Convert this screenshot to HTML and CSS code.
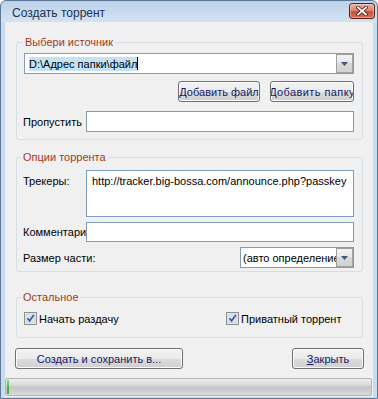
FILE: index.html
```html
<!DOCTYPE html>
<html lang="ru">
<head>
  <meta charset="UTF-8" />
  <title>Создать торрент</title>
  <link rel="stylesheet" href="styles.css">
</head>
<body>
  <div class="window">
    <div class="titlebar">
      <span class="title">Создать торрент</span>
      <span class="close">
        <svg width="12" height="10" viewBox="0 0 12 10">
          <path d="M2 1.5 L10 8.5 M10 1.5 L2 8.5" stroke="#4a1a12" stroke-width="3.4" stroke-linecap="square"/>
          <path d="M2 1.5 L10 8.5 M10 1.5 L2 8.5" stroke="#fff" stroke-width="1.8" stroke-linecap="square"/>
        </svg>
      </span>
    </div>

    <div class="client">
      <fieldset class="group g-source">
        <legend>Выбери источник</legend>
        <div class="combo wide">
          <span class="combo-text"><span class="sel">D:\Адрес папки\файл</span><span class="caret"></span></span>
          <span class="drop"><svg width="7" height="4" viewBox="0 0 7 4"><path d="M0 0 H7 L3.5 4 Z" fill="#3f5583"/></svg></span>
        </div>
        <div class="btn-row">
          <div class="btn w-file"><span>Добавить файл</span></div>
          <div class="btn w-folder"><span>Добавить папку</span></div>
        </div>
        <div class="field-row skip">
          <label>Пропустить</label>
          <div class="edit"></div>
        </div>
      </fieldset>

      <fieldset class="group g-options">
        <legend>Опции торрента</legend>
        <div class="tracker-row">
          <label>Трекеры:</label>
          <div class="memo">http://tracker.big-bossa.com/announce.php?passkey</div>
        </div>
        <div class="field-row comment">
          <label>Комментарий</label>
          <div class="edit short"></div>
        </div>
        <div class="field-row piece">
          <label>Размер части:</label>
          <div class="combo small">
            <span class="combo-text">(авто определение)</span>
            <span class="drop"><svg width="7" height="4" viewBox="0 0 7 4"><path d="M0 0 H7 L3.5 4 Z" fill="#3f5583"/></svg></span>
          </div>
        </div>
      </fieldset>

      <fieldset class="group g-other">
        <legend>Остальное</legend>
        <div class="checks">
          <div class="check">
            <svg width="13" height="13" viewBox="0 0 13 13">
              <rect x="0.5" y="0.5" width="12" height="12" fill="#f4f4f4" stroke="#8f8f8f"/>
              <rect x="2" y="2" width="9" height="9" fill="#dde3ea" stroke="#c3cbd5" stroke-width="0.8"/>
              <path d="M3.5 6.2 L5.6 8.8 L9.8 3" fill="none" stroke="#3f56a3" stroke-width="1.7"/>
            </svg>
            <span>Начать раздачу</span>
          </div>
          <div class="check">
            <svg width="13" height="13" viewBox="0 0 13 13">
              <rect x="0.5" y="0.5" width="12" height="12" fill="#f4f4f4" stroke="#8f8f8f"/>
              <rect x="2" y="2" width="9" height="9" fill="#dde3ea" stroke="#c3cbd5" stroke-width="0.8"/>
              <path d="M3.5 6.2 L5.6 8.8 L9.8 3" fill="none" stroke="#3f56a3" stroke-width="1.7"/>
            </svg>
            <span>Приватный торрент</span>
          </div>
        </div>
      </fieldset>

      <div class="actions">
        <div class="btn w-create"><span>Создать и сохранить в...</span></div>
        <div class="btn w-close"><span><u>З</u>акрыть</span></div>
      </div>

      <div class="progress">
        <div class="progress-fill" style="width:2px"></div>
      </div>
    </div>
  </div>
</body>
</html>
```

FILE: styles.css
```css
* { box-sizing: border-box; }
html, body { margin: 0; }
body {
  font-family: "Liberation Sans", Arial, sans-serif;
  font-size: 11px;
  color: #000;
  background: #fff;
  width: 378px;
  height: 399px;
  overflow: hidden;
}

.window {
  width: 378px;
  height: 399px;
  border: 1px solid #5f7897;
  border-radius: 6px 6px 0 0;
  background: linear-gradient(#bcd2ea, #d3e3f3 21px, #c9dbef 22px, #c9dbef);
  display: flex;
  flex-direction: column;
}

.titlebar {
  height: 21px;
  flex: none;
  display: flex;
  justify-content: space-between;
  align-items: flex-start;
  padding: 0 2px 0 11px;
}
.title {
  margin-top: 2px;
  line-height: 20px;
  font-size: 12px;
  color: #1b3255;
}
.close {
  margin-top: 2px;
  width: 26px;
  height: 16px;
  border: 1px solid #5a1f17;
  border-radius: 3px;
  background: linear-gradient(#eab0a2, #de8672 45%, #c9503a 55%, #d8715b);
  box-shadow: inset 0 0 0 1px rgba(255,255,255,0.35);
  display: flex;
  align-items: center;
  justify-content: center;
}

.client {
  flex: 1;
  margin: 0 4px 1px;
  background: #f0f0f0;
  display: flex;
  flex-direction: column;
}

/* group boxes */
.group {
  border: 1px solid #d5dfe5;
  border-radius: 3px;
  margin: 0 10px 0 11px;
  padding: 0 8px 7px 6px;
  min-width: 0;
}
.group legend {
  padding: 0 2px;
  margin-left: -2px;
  line-height: 13px;
  color: #a4391c;
}
.g-source { margin-top: 14px; padding-top: 4px; }
.g-source legend { margin-left: 0; }
.g-options { margin-top: 11px; padding-top: 6px; padding-bottom: 3px; }
.g-other { margin-top: 19px; padding-top: 8px; padding-bottom: 12px; }

/* edit controls */
.combo {
  height: 21px;
  border: 1px solid #7f9db9;
  background: #fff;
  display: flex;
}
.combo.wide { margin-left: 1px; }
.combo.small { width: 114px; margin-left: auto; }
.combo-text {
  flex: 1;
  min-width: 0;
  padding-left: 4px;
  display: flex;
  align-items: center;
  overflow: hidden;
  white-space: nowrap;
}
.combo.small .combo-text { padding-left: 2px; }
.sel { background: #c4e2f6; line-height: 14px; }
.caret { width: 1px; height: 13px; background: #000; flex: none; }
.drop {
  width: 17px;
  flex: none;
  border: 1px solid #a0a0a0;
  background: linear-gradient(#f3f3f3, #e6e6e6 50%, #d9d9d9 50%, #d2d2d2);
  display: flex;
  align-items: center;
  justify-content: center;
}

.edit {
  flex: 1;
  height: 21px;
  border: 1px solid #7f9db9;
  background: #fff;
}
.edit.short { height: 20px; }

.memo {
  flex: 1;
  height: 47px;
  border: 1px solid #7f9db9;
  background: #fff;
  padding: 4px 0 0 5px;
  line-height: 13px;
  white-space: nowrap;
  overflow: hidden;
}

.field-row {
  display: flex;
  align-items: center;
}
.field-row label, .tracker-row label {
  width: 63px;
  flex: none;
  white-space: nowrap;
}
.skip { margin-top: 9px; }
.comment { margin-top: 5px; }
.piece { margin-top: 5px; }

.tracker-row {
  display: flex;
  align-items: flex-start;
}
.tracker-row label { margin-top: 5px; line-height: 13px; }

/* buttons */
.btn-row {
  display: flex;
  justify-content: flex-end;
  gap: 10px;
  margin-top: 7px;
}
.btn {
  height: 21px;
  border: 1px solid #707070;
  border-radius: 3px;
  background: linear-gradient(#f2f2f2, #ebebeb 50%, #dddddd 50%, #cfcfcf);
  box-shadow: inset 0 0 0 1px #fbfbfb;
  color: #14186a;
  display: flex;
  align-items: center;
  justify-content: center;
  overflow: hidden;
  white-space: nowrap;
}
.btn span { flex: none; }
.w-file { width: 82px; }
.w-folder { width: 84px; }
.w-folder span { letter-spacing: 0.4px; }
.w-create { width: 168px; }
.w-close { width: 72px; }

/* checkboxes */
.checks {
  display: grid;
  grid-template-columns: 202px 1fr;
}
.check {
  display: flex;
  align-items: center;
  gap: 2px;
  padding-left: 1px;
}
.check svg { flex: none; }

.actions {
  display: flex;
  justify-content: space-between;
  margin: 10px 9px 0 10px;
}

.progress {
  margin: 9px 1px 0 0;
  height: 18px;
  border: 1px solid #b4b4b4;
  border-radius: 2px;
  background: linear-gradient(#ececec, #dcdcdc 35%, #c6c6c6 50%, #cdcdcd 70%, #dadada);
  padding: 1px;
  display: flex;
}
.progress-fill {
  background: linear-gradient(#7fe07a, #3cbf38 50%, #2fae2c);
}
```
